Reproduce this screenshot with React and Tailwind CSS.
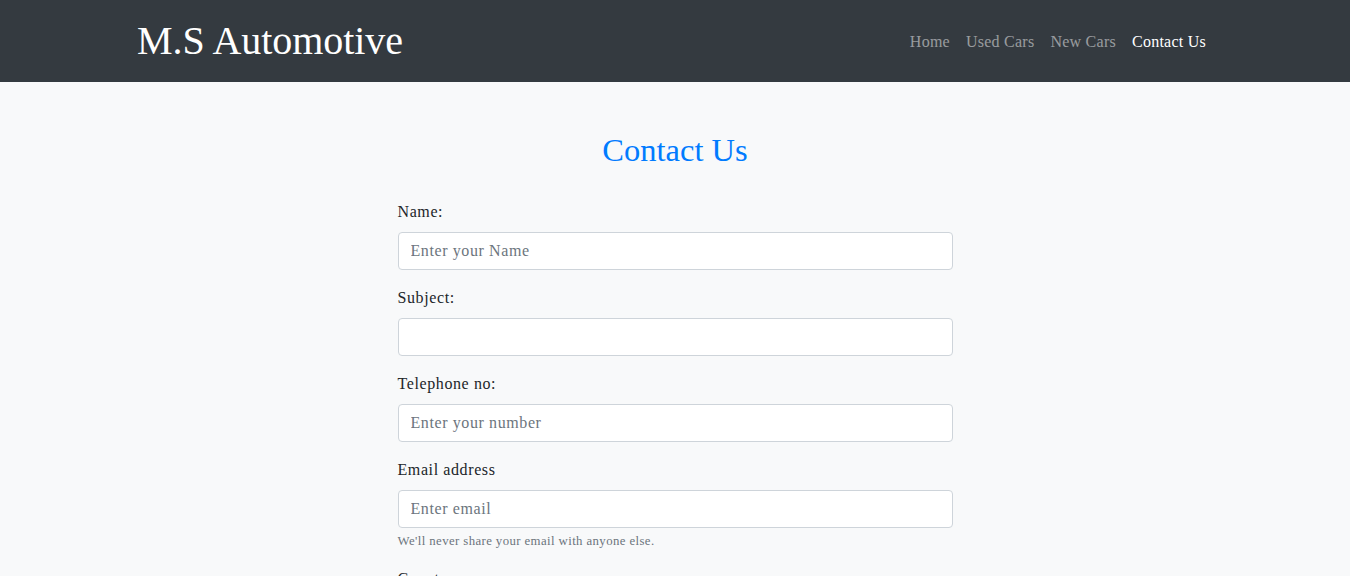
export default function App() {
  const font = { fontFamily: '"Liberation Serif", serif' };
  const Field = ({ label, placeholder, help }) => (
    <div className="mb-4">
      <label className="block mb-2 text-[16px] leading-6 tracking-[0.6px] text-[#212529]">{label}</label>
      <input
        className="block w-full h-[38px] px-3 text-[16px] tracking-[0.6px] bg-white border border-[#ced4da] rounded-[4px] text-[#495057] placeholder:text-[#6c757d] outline-none"
        placeholder={placeholder}
        style={font}
      />
      {help && <small className="block mt-1 text-[12.8px] leading-[19px] tracking-[0.4px] text-[#6c757d]">{help}</small>}
    </div>
  );
  return (
    <div className="min-h-[576px] bg-[#f8f9fa]" style={font}>
      <nav className="h-[82px] bg-[#343a40]">
        <div className="w-[1110px] mx-auto h-full flex items-center justify-between pl-[17px] pr-[16px]">
          <span className="text-[40px] leading-none text-white -tracking-[0.05px]">M.S Automotive</span>
          <div className="flex items-center text-[16px] tracking-[0.25px] pt-[2px]">
            <a className="px-2 text-white/50">Home</a>
            <a className="px-2 text-white/50">Used Cars</a>
            <a className="px-2 text-white/50">New Cars</a>
            <a className="px-2 text-white">Contact Us</a>
          </div>
        </div>
      </nav>
      <div className="w-[555px] mx-auto pt-[48px]">
        <h2 className="text-center text-[32.5px] leading-[40px] text-[#007bff] mb-[30px]">Contact Us</h2>
        <Field label="Name:" placeholder="Enter your Name" />
        <Field label="Subject:" placeholder="" />
        <Field label="Telephone no:" placeholder="Enter your number" />
        <Field label="Email address" placeholder="Enter email" help="We'll never share your email with anyone else." />
        <Field label="Country:" placeholder="" />
      </div>
    </div>
  );
}
